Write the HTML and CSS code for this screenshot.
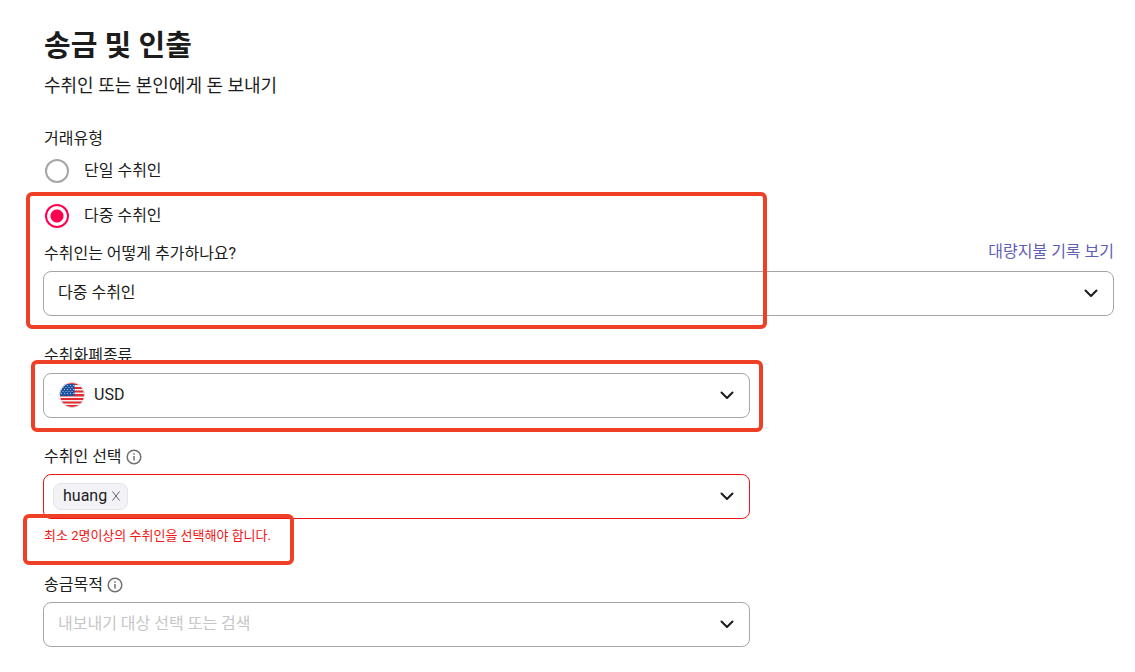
FILE: index.html
```html
<!DOCTYPE html>
<html lang="ko">
<head>
<meta charset="utf-8">
<meta name="viewport" content="width=device-width, initial-scale=1">
<title>송금 및 인출</title>
<link rel="stylesheet" href="styles.css">
</head>
<body>
<main class="page">
  <h1 class="title">송금 및 인출</h1>
  <p class="subtitle">수취인 또는 본인에게 돈 보내기</p>
  <form class="form">
    <fieldset class="types">
      <legend class="label">거래유형</legend>
      <label class="option"><input class="radio" type="radio" name="type">단일 수취인</label>
      <label class="option"><input class="radio" type="radio" name="type" checked>다중 수취인</label>
    </fieldset>

    <div class="field field-method">
      <div class="label-row">
        <label class="label" for="method">수취인는 어떻게 추가하나요?</label>
        <a class="link" href="#history">대량지불 기록 보기</a>
      </div>
      <div class="box">
        <select class="control" id="method"><option>다중 수취인</option></select>
        <svg class="chevron" viewBox="0 0 16 16" aria-hidden="true"><path d="M2.500 5.500l5.500 5.500 5.500-5.500"/></svg>
      </div>
      <span class="mark mark-method"></span>
    </div>

    <div class="field field-narrow">
      <label class="label" for="currency">수취화폐종류</label>
      <div class="box">
        <svg class="flag" viewBox="0 0 26 26" aria-hidden="true">
          <defs><clipPath id="round"><circle cx="13" cy="13" r="12.5"/></clipPath></defs>
          <g clip-path="url(#round)">
            <path fill="#f4f1f2" d="M0 0h26v26H0z"/>
            <path fill="#e02a30" d="M0 0h26v3H0zM0 5h26v2H0zM0 8.500h26v2H0zM0 12h26v2.500H0zM0 16h26v2H0zM0 19.500h26v2H0zM0 23h26v3H0z"/>
            <path fill="#1c52a0" d="M0 2h15.500v12H0z"/>
            <path stroke="#a9c4e6" stroke-width="1" stroke-dasharray="1 2" d="M5 3.500h10M3.500 5.500h11M2 7.500h13M3.500 9.500h11M2 11.500h13"/>
          </g>
          <circle cx="13" cy="13" r="12.500" fill="none" stroke="#e5e0e2"/>
        </svg>
        <select class="control control-flag" id="currency"><option>USD</option></select>
        <svg class="chevron" viewBox="0 0 16 16" aria-hidden="true"><path d="M2.500 5.500l5.500 5.500 5.500-5.500"/></svg>
        <span class="mark mark-currency"></span>
      </div>
    </div>

    <div class="field field-narrow">
      <div class="label-row label-info">
        <label class="label" for="payee">수취인 선택</label>
        <svg class="info" viewBox="0 0 16 16" aria-hidden="true"><circle cx="8" cy="8" r="6.800"/><path d="M8 7v4.500M8 4.300v1.500"/></svg>
      </div>
      <div class="box box-error">
        <span class="chip">huang<button class="remove" type="button" aria-label="삭제"><svg viewBox="0 0 10 10" aria-hidden="true"><path d="M1.500 0.500l7 9M8.500 0.500l-7 9"/></svg></button></span>
        <input class="control" id="payee" type="text" aria-describedby="payee-error">
        <svg class="chevron" viewBox="0 0 16 16" aria-hidden="true"><path d="M2.500 5.500l5.500 5.500 5.500-5.500"/></svg>
      </div>
      <p class="error" id="payee-error">최소 2명이상의 수취인을 선택해야 합니다.<span class="mark mark-error"></span></p>
    </div>

    <div class="field field-narrow">
      <div class="label-row label-info">
        <label class="label" for="purpose">송금목적</label>
        <svg class="info" viewBox="0 0 16 16" aria-hidden="true"><circle cx="8" cy="8" r="6.800"/><path d="M8 7v4.500M8 4.300v1.500"/></svg>
      </div>
      <div class="box">
        <input class="control" id="purpose" type="text" placeholder="내보내기 대상 선택 또는 검색">
        <svg class="chevron" viewBox="0 0 16 16" aria-hidden="true"><path d="M2.500 5.500l5.500 5.500 5.500-5.500"/></svg>
      </div>
    </div>
  </form>
</main>
</body>
</html>
```
FILE: styles.css
```css
* { box-sizing: border-box; }
body {
  margin: 0;
  background: #fff;
  color: #1c1c1c;
  font: 16px/24px Roboto, "Noto Sans CJK KR", sans-serif;
}
.page { padding: 26px 21px 24px 43px; }
.title { margin: 0; padding-left: 1px; font-size: 29px; line-height: 40px; font-weight: 700; }
.subtitle { margin: 8px 0 0; padding-left: 1px; font-size: 18px; line-height: 24px; }
.form { margin-top: 29px; }
.label { padding: 0 0 0 1px; }
.types { display: flex; flex-direction: column; gap: 21px; margin: 0; padding: 0; border: 0; }
.types .label { margin-bottom: 8px; }
.option { display: flex; align-items: center; gap: 15px; padding-left: 2px; }
.radio {
  appearance: none;
  width: 24px;
  height: 24px;
  margin: 0;
  border: 2px solid #a6a6a6;
  border-radius: 50%;
  background: #fff;
}
.radio:checked { border-color: #ff0050; background: radial-gradient(circle, #ff0050 6px, #fff 7px); }
.field { display: flex; flex-direction: column; gap: 5px; margin-top: 27px; }
.field-narrow { width: 66%; }
.field-method { position: relative; margin: 14px 0 28px; }
.field-method + .field { margin-top: 0; }
.label-row { display: flex; justify-content: space-between; }
.label-info { justify-content: flex-start; align-items: center; gap: 4px; }
.link { color: #5f5fb5; text-decoration: none; line-height: 20px; }
.box {
  position: relative;
  display: flex;
  align-items: center;
  height: 45px;
  border: 1px solid #a6a6a6;
  border-radius: 8px;
}
.box-error { border-color: #f01414; padding-left: 9px; }
.control {
  appearance: none;
  flex: 1;
  min-width: 0;
  height: 100%;
  padding: 0 40px 2px 14px;
  border: 0;
  outline: 0;
  background: transparent;
  color: inherit;
  font: inherit;
}
.control::placeholder { color: #c6c6c6; opacity: 1; }
.control-flag { padding-left: 9px; }
.flag { width: 26px; height: 26px; margin: 0 0 2px 15px; }
.chevron {
  position: absolute;
  top: 13px;
  right: 14px;
  width: 16px;
  height: 16px;
  fill: none;
  stroke: #1c1c1c;
  stroke-width: 2;
  stroke-linecap: round;
  stroke-linejoin: round;
  pointer-events: none;
}
.info { width: 16px; height: 16px; fill: none; stroke: #707070; stroke-width: 1.5; }
.chip {
  display: flex;
  align-items: center;
  gap: 4px;
  height: 27px;
  padding: 0 6px 2px 9px;
  border: 1px solid #e4e4e6;
  border-radius: 8px;
  background: #f2f2f7;
}
.remove { display: flex; padding: 0; border: 0; background: none; }
.remove svg { width: 10px; height: 10px; fill: none; stroke: #666; stroke-width: 1; }
.error {
  position: relative;
  align-self: flex-start;
  margin: 0;
  padding: 1px 0 0 1px;
  color: #f01414;
  font-size: 13px;
  line-height: 21px;
}
.mark { position: absolute; border: 4px solid #ee4027; border-radius: 6px; pointer-events: none; }
.mark-method { top: -50px; bottom: -13px; left: -17px; width: calc(66% + 34px); }
.mark-currency { inset: -14px -14px -15px -13px; }
.mark-error { inset: -10px -23px -19px -20px; }
```
